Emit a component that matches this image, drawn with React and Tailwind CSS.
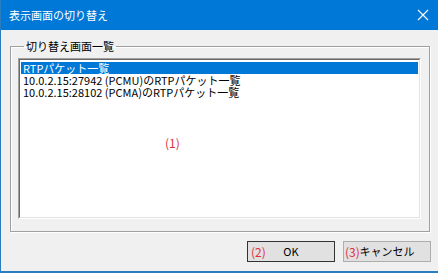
import React from "react";

const font = { fontFamily: '"Noto Sans CJK JP", "Noto Sans", sans-serif' };

const rows = [
  "RTPパケット一覧",
  "10.0.2.15:27942 (PCMU)のRTPパケット一覧",
  "10.0.2.15:28102 (PCMA)のRTPパケット一覧",
];

const App = () => {
  return (
    <div
      className="w-[438px] h-[273px] flex flex-col bg-[#f0f0f0] border-l border-b-[2px] border-[#2a7ec0] text-black overflow-hidden"
      style={font}
    >
      {/* Title bar */}
      <div className="h-[30px] shrink-0 bg-[#0078d7] flex items-center justify-between pl-[9px] pr-[8px] -ml-px">
        <span className="text-white text-[11px] leading-none">表示画面の切り替え</span>
        <svg width="12" height="12" viewBox="0 0 12 12" className="mr-[1px]">
          <path d="M1 1 L11 11 M11 1 L1 11" stroke="white" strokeWidth="1.1" />
        </svg>
      </div>

      {/* Group box */}
      <fieldset className="mt-[8px] ml-[9px] w-[420px] h-[194px] border border-[#a0a0a0] shadow-[inset_1px_1px_0_white,1px_1px_0_white] px-[7px] pt-0 m-0">
        <legend className="ml-[6px] px-[2px] text-[11px] leading-[16px]">切り替え画面一覧</legend>
        <div className="relative mt-[4px] w-[403px] h-[161px] bg-white border-t border-l border-[#a0a0a0] border-r border-b border-r-white border-b-white">
          <div className="w-full h-full border-t border-l border-[#696969] border-r border-b border-r-[#e3e3e3] border-b-[#e3e3e3] pt-[2px] px-[1px]">
            {rows.map((r, i) => (
              <div
                key={i}
                className={`h-[12px] leading-[12px] text-[11px] pl-[2px] whitespace-nowrap ${
                  i === 0 ? "bg-[#0078d7] text-white" : ""
                }`}
              >
                {r}
              </div>
            ))}
          </div>
          <span className="absolute left-[146px] top-[78px] text-[12px] text-[#e0303a] leading-none">(1)</span>
        </div>
      </fieldset>

      {/* Buttons */}
      <div className="flex justify-end gap-[8px] pr-[7px] mt-[9px]">
        <button className="relative w-[88px] h-[21px] bg-[#e1e1e1] border border-[#333] text-[11px] leading-none flex items-center justify-center">
          <span className="absolute left-[3px] text-[12px] text-[#e0303a]">(2)</span>
          OK
        </button>
        <button className="relative w-[88px] h-[21px] bg-[#e1e1e1] border border-[#adadad] text-[11px] leading-none flex items-center justify-center">
          <span className="absolute left-[1px] text-[12px] text-[#e0303a]">(3)</span>
          キャンセル
        </button>
      </div>
    </div>
  );
};

export default App;
